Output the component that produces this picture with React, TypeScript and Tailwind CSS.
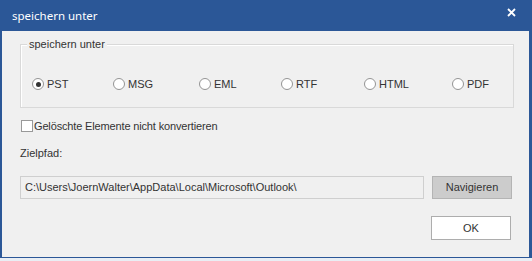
import React from "react";

const Radio = ({ label, checked, w }: { label: string; checked?: boolean; w: string }) => (
  <div className={`flex items-center gap-[3px] ${w}`}>
    <span className="flex h-[12px] w-[12px] shrink-0 items-center justify-center rounded-full border border-[#949494] bg-white">
      {checked && <span className="h-[5px] w-[5px] rounded-full bg-[#333]" />}
    </span>
    <span className="leading-[14px]">{label}</span>
  </div>
);

export default function App() {
  return (
    <div
      className="flex h-[261px] w-[532px] flex-col bg-[#e9eef4] text-[11px] text-[#333]"
      style={{ fontFamily: '"Liberation Sans", Arial, sans-serif' }}
    >
      <div className="flex h-[31px] shrink-0 items-center justify-between bg-[#2b5797] pl-[12px] pr-[16px] text-white">
        <span className="text-[11.5px] leading-none" style={{ fontFamily: '"Noto Sans", sans-serif' }}>
          speichern unter
        </span>
        <svg width="9" height="9" viewBox="0 0 9 9" className="mb-[7px]">
          <path d="M1 1 L8 8 M8 1 L1 8" stroke="white" strokeWidth="1.8" />
        </svg>
      </div>
      <div className="flex h-[227px] shrink-0 flex-col border-b border-l-2 border-r-[3px] border-[#2b5797] bg-[#f0f0f0] pl-[18px] pr-[16px]">
        <div className="relative mt-[13px] h-[64px] w-[494px] border border-[#d9d9d9] shadow-[inset_1px_1px_0_#fff]">
          <span className="absolute left-[6px] top-[-8px] bg-[#f0f0f0] px-[2px] leading-[14px]">speichern unter</span>
          <div className="flex pl-[11px] pt-[32px]">
            <Radio label="PST" checked w="w-[81px]" />
            <Radio label="MSG" w="w-[86px]" />
            <Radio label="EML" w="w-[82px]" />
            <Radio label="RTF" w="w-[83px]" />
            <Radio label="HTML" w="w-[88px]" />
            <Radio label="PDF" w="w-[50px]" />
          </div>
        </div>
        <div className="mt-[11px] flex items-center gap-[1px] leading-[14px]">
          <span className="ml-[1px] h-[12px] w-[12px] border border-[#999] bg-white" />
          <span className="tracking-[-0.15px]">Gelöschte Elemente nicht konvertieren</span>
        </div>
        <div className="mt-[13px] leading-[14px]">Zielpfad:</div>
        <div className="mt-[16px] flex gap-[8px]">
          <div className="flex h-[23px] w-[404px] items-center border border-[#cfcfcf] bg-[#f0f0f0] pl-[4px]">
            C:\Users\JoernWalter\AppData\Local\Microsoft\Outlook\
          </div>
          <div className="flex h-[23px] w-[80px] items-center justify-center border border-[#b4b4b4] bg-[#cccccc]">
            Navigieren
          </div>
        </div>
        <div className="mt-[17px] flex justify-end pr-[2px]">
          <div className="flex h-[24px] w-[80px] items-center justify-center border border-[#adadad] bg-white">
            OK
          </div>
        </div>
      </div>
    </div>
  );
}
